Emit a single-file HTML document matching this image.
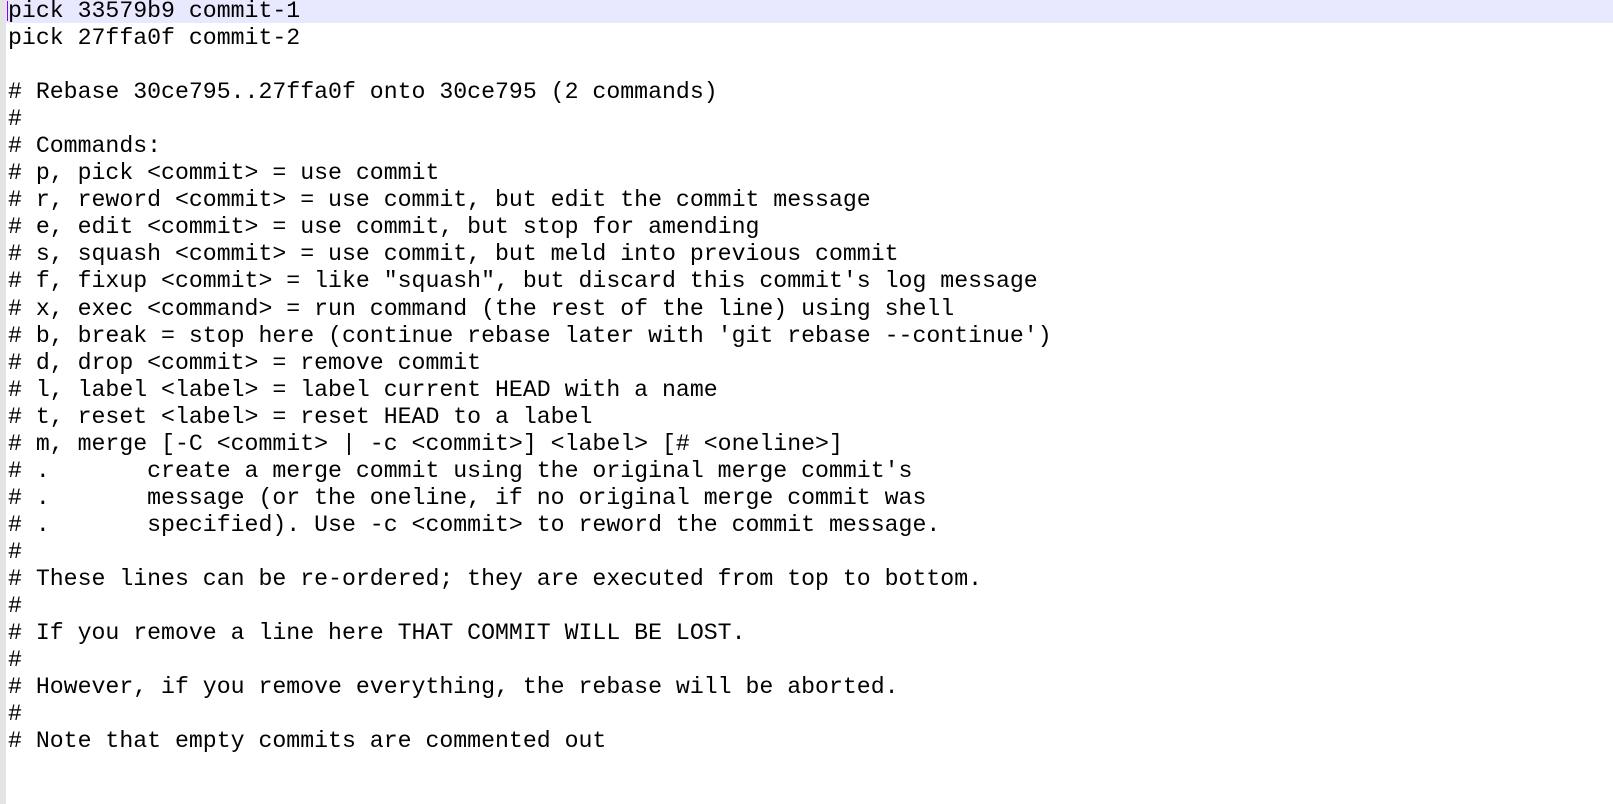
<!DOCTYPE html>
<html><head><style>
html,body{margin:0;padding:0;width:1613px;height:804px;overflow:hidden;background:#fff}
.gut{position:absolute;left:0;top:0;width:6px;height:804px;background:#e4e4e4}
.hl{position:absolute;left:6px;top:0;right:0;height:23px;background:#e8e8ff}
.cur{position:absolute;left:7px;top:1px;width:1px;height:20px;background:#8000ff}
pre{position:absolute;left:8px;top:-2px;margin:0;font-family:"Liberation Mono","Courier New",monospace;font-size:23.2px;line-height:27.04px;color:#000}
</style></head><body>
<div class="gut"></div><div class="hl"></div><div class="cur"></div>
<pre>pick 33579b9 commit-1
pick 27ffa0f commit-2

# Rebase 30ce795..27ffa0f onto 30ce795 (2 commands)
#
# Commands:
# p, pick &lt;commit&gt; = use commit
# r, reword &lt;commit&gt; = use commit, but edit the commit message
# e, edit &lt;commit&gt; = use commit, but stop for amending
# s, squash &lt;commit&gt; = use commit, but meld into previous commit
# f, fixup &lt;commit&gt; = like "squash", but discard this commit's log message
# x, exec &lt;command&gt; = run command (the rest of the line) using shell
# b, break = stop here (continue rebase later with 'git rebase --continue')
# d, drop &lt;commit&gt; = remove commit
# l, label &lt;label&gt; = label current HEAD with a name
# t, reset &lt;label&gt; = reset HEAD to a label
# m, merge [-C &lt;commit&gt; | -c &lt;commit&gt;] &lt;label&gt; [# &lt;oneline&gt;]
# .       create a merge commit using the original merge commit's
# .       message (or the oneline, if no original merge commit was
# .       specified). Use -c &lt;commit&gt; to reword the commit message.
#
# These lines can be re-ordered; they are executed from top to bottom.
#
# If you remove a line here THAT COMMIT WILL BE LOST.
#
# However, if you remove everything, the rebase will be aborted.
#
# Note that empty commits are commented out</pre>
</body></html>
